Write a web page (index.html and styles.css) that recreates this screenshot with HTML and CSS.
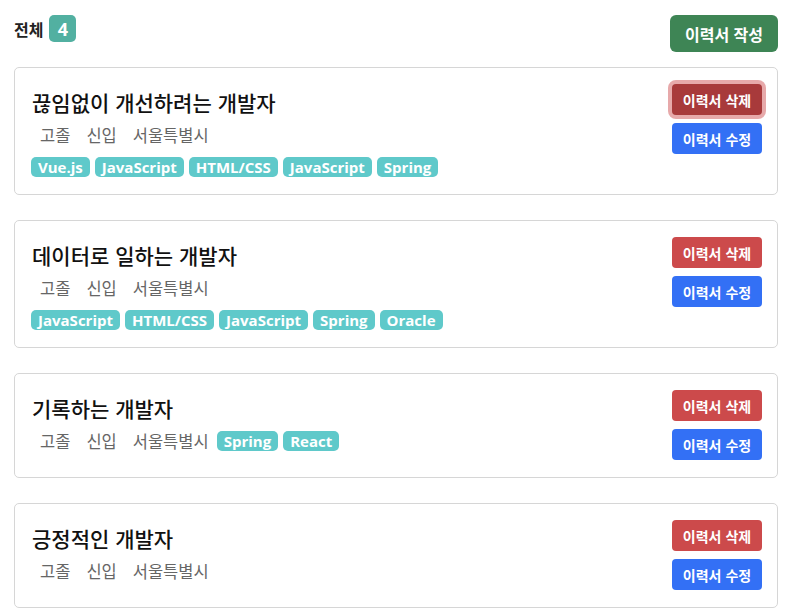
FILE: index.html
```html
<!DOCTYPE html>
<html lang="ko">
<head>
    <meta charset="UTF-8">
    <meta name="viewport" content="width=device-width, initial-scale=1.0">
    <title>이력서 목록</title>
    <link rel="stylesheet" href="styles.css">
</head>
<body>
    <div class="resume-page">
        <div class="list-header">
            <div class="total">전체 <span class="count">4</span></div>
            <button class="write-btn">이력서 작성</button>
        </div>

        <div class="resume-card">
            <div class="resume-info">
                <h2 class="resume-title">끊임없이 개선하려는 개발자</h2>
                <div class="resume-meta">
                    <span class="meta-item">고졸</span>
                    <span class="meta-item">신입</span>
                    <span class="meta-item">서울특별시</span>
                </div>
                <div class="tag-list">
                    <span class="tag">Vue.js</span>
                    <span class="tag">JavaScript</span>
                    <span class="tag">HTML/CSS</span>
                    <span class="tag">JavaScript</span>
                    <span class="tag">Spring</span>
                </div>
            </div>
            <div class="resume-actions">
                <button class="delete-btn focused">이력서 삭제</button>
                <button class="edit-btn">이력서 수정</button>
            </div>
        </div>

        <div class="resume-card">
            <div class="resume-info">
                <h2 class="resume-title">데이터로 일하는 개발자</h2>
                <div class="resume-meta">
                    <span class="meta-item">고졸</span>
                    <span class="meta-item">신입</span>
                    <span class="meta-item">서울특별시</span>
                </div>
                <div class="tag-list">
                    <span class="tag">JavaScript</span>
                    <span class="tag">HTML/CSS</span>
                    <span class="tag">JavaScript</span>
                    <span class="tag">Spring</span>
                    <span class="tag">Oracle</span>
                </div>
            </div>
            <div class="resume-actions">
                <button class="delete-btn">이력서 삭제</button>
                <button class="edit-btn">이력서 수정</button>
            </div>
        </div>

        <div class="resume-card">
            <div class="resume-info">
                <h2 class="resume-title">기록하는 개발자</h2>
                <div class="resume-meta">
                    <span class="meta-item">고졸</span>
                    <span class="meta-item">신입</span>
                    <span class="meta-item">서울특별시</span>
                    <span class="tag">Spring</span>
                    <span class="tag">React</span>
                </div>
            </div>
            <div class="resume-actions">
                <button class="delete-btn">이력서 삭제</button>
                <button class="edit-btn">이력서 수정</button>
            </div>
        </div>

        <div class="resume-card">
            <div class="resume-info">
                <h2 class="resume-title">긍정적인 개발자</h2>
                <div class="resume-meta">
                    <span class="meta-item">고졸</span>
                    <span class="meta-item">신입</span>
                    <span class="meta-item">서울특별시</span>
                </div>
            </div>
            <div class="resume-actions">
                <button class="delete-btn">이력서 삭제</button>
                <button class="edit-btn">이력서 수정</button>
            </div>
        </div>
    </div>
</body>
</html>
```

FILE: styles.css
```css
body {
    font-family: "Noto Sans CJK KR", "Noto Sans", sans-serif;
    background-color: #fff;
    color: #111;
    margin: 0;
    padding: 0;
}
.resume-page {
    width: 764px;
    padding: 15px 0 0 14px;
}
.list-header {
    display: flex;
    justify-content: space-between;
    align-items: flex-start;
    margin-bottom: 15px;
}
.total {
    display: flex;
    align-items: center;
    gap: 6px;
    font-size: 16px;
    font-weight: bold;
    color: #222;
}
.count {
    display: inline-flex;
    align-items: center;
    justify-content: center;
    width: 27px;
    height: 27px;
    border-radius: 5px;
    background-color: #52b0a1;
    color: white;
    font-family: "Open Sans", sans-serif;
    font-size: 18px;
    font-weight: bold;
}
button {
    font-family: "Noto Sans CJK KR", sans-serif;
    font-weight: bold;
    color: white;
    border: none;
    cursor: pointer;
    padding: 0;
}
.write-btn {
    width: 108px;
    height: 37px;
    border-radius: 6px;
    background-color: #3e8555;
    font-size: 16px;
}
.resume-card {
    display: flex;
    justify-content: space-between;
    border: 1px solid #d6d6d6;
    border-radius: 5px;
    padding: 16px 15px 17px 17px;
    margin-bottom: 25px;
}
.resume-title {
    margin: 0;
    font-size: 21px;
    font-weight: 500;
    line-height: 36px;
    color: #111;
}
.resume-meta {
    display: flex;
    align-items: center;
    margin-top: 3px;
    height: 24px;
}
.meta-item {
    padding: 0 8px;
    font-size: 16.5px;
    color: #666;
}
.tag-list {
    display: flex;
    gap: 5px;
    margin-top: 10px;
    margin-left: -1px;
}
.tag {
    display: inline-block;
    height: 20px;
    line-height: 20px;
    padding: 0 7px;
    border-radius: 5px;
    background-color: #5fc9ca;
    color: white;
    font-family: "Open Sans", sans-serif;
    font-size: 15px;
    font-weight: bold;
}
.resume-meta .tag {
    margin-right: 5px;
}
.resume-actions {
    display: flex;
    flex-direction: column;
    gap: 8px;
}
.delete-btn, .edit-btn {
    width: 90px;
    height: 31px;
    border-radius: 4px;
    font-size: 14px;
}
.delete-btn {
    background-color: #cc4a4b;
}
.delete-btn.focused {
    background-color: #a83a3b;
    box-shadow: 0 0 0 4px #e7a9aa;
}
.edit-btn {
    background-color: #3370f5;
}
```
